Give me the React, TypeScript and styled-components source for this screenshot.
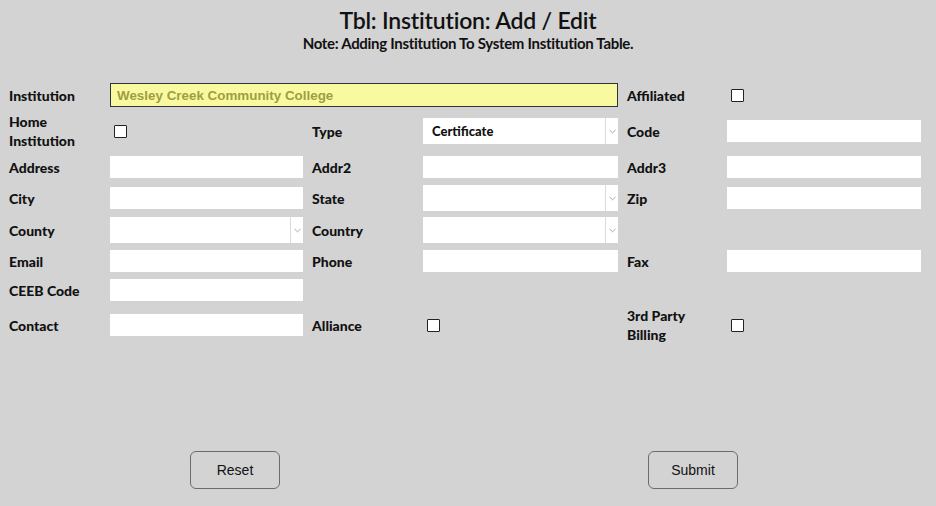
import styled, { createGlobalStyle } from 'styled-components';

const GlobalStyle = createGlobalStyle`
  html, body {
    margin: 0;
    padding: 0;
    background: #d3d3d3;
  }
  body {
    font-family: Lato, "Noto Sans", sans-serif;
    color: #111;
  }
`;

const Chevron = () => (
  <svg width="7" height="5" viewBox="0 0 7 5">
    <path d="M0.5 1 L3.5 3.8 L6.5 1" fill="none" stroke="#a8a8a8" strokeWidth="1" />
  </svg>
);

const Select = ({ value, options }: { value?: string; options: string[] }) => (
  <SelectBox>
    <SelectField defaultValue={value}>
      {options.map((o) => (
        <option key={o} value={o}>
          {o}
        </option>
      ))}
    </SelectField>
    <ArrowBox>
      <Chevron />
    </ArrowBox>
  </SelectBox>
);

const App = () => {
  return (
    <Page>
      <GlobalStyle />
      <Header>
        <Title>Tbl: Institution: Add / Edit</Title>
        <Note>Note: Adding Institution To System Institution Table.</Note>
      </Header>

      <Form>
        {/* row 1 */}
        <Label>Institution</Label>
        <InstitutionInput defaultValue="Wesley Creek Community College" />
        <Label>Affiliated</Label>
        <CheckCell>
          <Check type="checkbox" />
        </CheckCell>

        {/* row 2 */}
        <Label>
          Home
          <br />
          Institution
        </Label>
        <CheckCell>
          <Check type="checkbox" />
        </CheckCell>
        <Label>Type</Label>
        <Select value="Certificate" options={['Certificate', 'Associate', 'Bachelor']} />
        <Label>Code</Label>
        <TextInput />

        {/* row 3 */}
        <Label>Address</Label>
        <TextInput />
        <Label>Addr2</Label>
        <TextInput />
        <Label>Addr3</Label>
        <TextInput />

        {/* row 4 */}
        <Label>City</Label>
        <TextInput />
        <Label>State</Label>
        <Select options={['']} />
        <Label>Zip</Label>
        <TextInput />

        {/* row 5 */}
        <Label>County</Label>
        <Select options={['']} />
        <Label>Country</Label>
        <Select options={['']} />
        <Empty />
        <Empty />

        {/* row 6 */}
        <Label>Email</Label>
        <TextInput />
        <Label>Phone</Label>
        <TextInput />
        <Label>Fax</Label>
        <TextInput />

        {/* row 7 */}
        <Label>CEEB Code</Label>
        <TextInput />
        <Empty />
        <Empty />
        <Empty />
        <Empty />

        {/* row 8 */}
        <Label>Contact</Label>
        <TextInput />
        <Label>Alliance</Label>
        <CheckCell>
          <Check type="checkbox" />
        </CheckCell>
        <Label>
          3rd Party
          <br />
          Billing
        </Label>
        <CheckCell>
          <Check type="checkbox" />
        </CheckCell>
      </Form>

      <ButtonRow>
        <Button type="button">Reset</Button>
        <Button type="button">Submit</Button>
      </ButtonRow>
    </Page>
  );
};
export default App;

const Page = styled.div`
  width: 936px;
  height: 506px;
  overflow: hidden;
  background: #d3d3d3;
`;

const Header = styled.div`
  display: flex;
  flex-direction: column;
  align-items: center;
  padding-top: 7px;
`;

const Title = styled.h1`
  margin: 0;
  font-family: Lato, sans-serif;
  font-weight: 600;
  font-size: 23px;
  line-height: 26px;
  letter-spacing: -0.2px;
  color: #111;
`;

const Note = styled.div`
  font-family: Lato, sans-serif;
  font-weight: 700;
  font-size: 15px;
  line-height: 17px;
  letter-spacing: -0.3px;
  margin-top: 2px;
  color: #111;
`;

const Form = styled.div`
  display: grid;
  grid-template-columns: 92px 193px 102px 195px 91px 194px;
  grid-template-rows: 24px 48px 24px 38px 26px 36px 22px 48px;
  column-gap: 9px;
  align-items: center;
  padding-left: 9px;
  margin-top: 31px;
`;

const Label = styled.div`
  font-family: Lato, sans-serif;
  font-weight: 900;
  font-size: 14px;
  line-height: 19px;
  color: #111;
`;

const Empty = styled.div``;

const TextInput = styled.input`
  box-sizing: border-box;
  height: 22px;
  width: 100%;
  border: none;
  background: #fff;
  padding: 0 8px;
  outline: none;
  font-family: Lato, sans-serif;
  font-size: 12px;
`;

const InstitutionInput = styled.input`
  grid-column: 2 / span 3;
  box-sizing: border-box;
  height: 24px;
  width: 100%;
  border: 1px solid #30323f;
  background: #f9fa9f;
  padding: 0 6px;
  outline: none;
  font-family: "Liberation Sans", Arial, sans-serif;
  font-weight: 700;
  font-size: 13.4px;
  color: #9f9e42;
`;

const SelectBox = styled.div`
  position: relative;
  display: flex;
  height: 26px;
  background: #fff;
`;

const SelectField = styled.select`
  flex: 1;
  min-width: 0;
  appearance: none;
  border: none;
  background: transparent;
  padding: 0 9px;
  outline: none;
  font-family: Lato, sans-serif;
  font-weight: 900;
  font-size: 13px;
  color: #111;
`;

const ArrowBox = styled.div`
  width: 12px;
  border-left: 1px solid #dcdcdc;
  display: flex;
  align-items: center;
  justify-content: center;
  pointer-events: none;
`;

const CheckCell = styled.div`
  display: flex;
  align-items: center;
  padding-left: 4px;
`;

const Check = styled.input`
  appearance: none;
  margin: 0;
  width: 13px;
  height: 13px;
  box-sizing: border-box;
  border: 1px solid #222;
  border-radius: 1px;
  background: #fff;
`;

const ButtonRow = styled.div`
  display: flex;
  justify-content: center;
  gap: 368px;
  padding-right: 8px;
  margin-top: 102px;
`;

const Button = styled.button`
  width: 90px;
  height: 38px;
  box-sizing: border-box;
  border: 1px solid #6b6b6b;
  border-radius: 6px;
  background: #d3d3d3;
  font-family: "Liberation Sans", Arial, sans-serif;
  font-size: 14px;
  color: #111;
  cursor: pointer;
`;
